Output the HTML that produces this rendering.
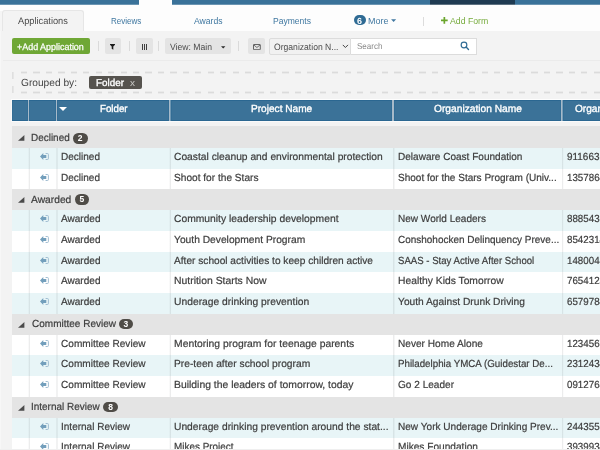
<!DOCTYPE html>
<html lang="en">
<head>
<meta charset="utf-8">
<title>Applications</title>
<style>
*{box-sizing:border-box;margin:0;padding:0}
html,body{width:600px;height:450px;overflow:hidden;background:#f3f3f3}
body{font-family:"Liberation Sans",sans-serif;font-size:10px;color:#444}
#app{position:relative;width:600px;height:450px;overflow:hidden;background:#f7f7f7;will-change:transform}
.t{position:absolute;white-space:pre;transform-origin:0 50%;display:block}
i{display:block;position:absolute;font-style:normal}

/* top colour band */
.topband{position:absolute;left:0;top:0;width:600px;height:5px;background:#fdfdfd}
.topband i{top:0;height:5px;background:linear-gradient(#3a7299 0,#3a7299 4px,#6b95b2 4px,#6b95b2 5px)}
.topband .b1{left:0;width:139px}
.topband .b2{left:172px;width:258px}
.topband .b3{left:430px;width:85px;background:linear-gradient(#1f3b52 0,#1f3b52 4px,#5d7181 4px,#5d7181 5px)}
.topband .b4{left:515px;width:85px}

/* tab strip */
.tabs{position:absolute;left:0;top:5px;width:600px;height:26px;background:#fdfdfd}
.tabs .active{left:2px;top:5px;width:82px;height:21px;background:#f3f3f3;border:1px solid #e6e6e6;border-bottom:0;border-radius:3px 3px 0 0}
.tabs .edge{left:0;top:6px;width:2px;height:20px;background:#f5f5f5}
.tabs .count{left:354px;top:10px;width:11.5px;height:10.4px;border-radius:5.2px;background:#2f6b94}
.tabs .sep{left:423px;top:12px;width:1px;height:8.5px;background:#dcdcdc}
.tabs svg{position:absolute}

/* main panel */
.panel{position:absolute;left:1px;top:31px;width:599px;height:419px;background:#f3f3f3}
.toolbar{position:absolute;left:0;top:31px;width:600px;height:31px}
.toolbar .btn{top:7px;height:16px;background:#e4e4e4;border-radius:2px}
.toolbar .add{left:12px;width:78px;background:#6fa735}
.toolbar .sep{top:10px;height:10px;width:1px;background:#dadada}
.toolbar .field{top:7px;height:17px;background:#fff;border:1px solid #dcdcdc}
.toolbar svg{position:absolute}
.toolbar .rule{left:3px;top:28.5px;width:597px;height:1.5px;background:#ebebeb}

/* grouping panel */
.grouping{position:absolute;left:0;top:62px;width:600px;height:38px}
.grouping .dash-h{left:21px;width:579px;height:3px;background:repeating-linear-gradient(90deg,#dbdbdb 0,#dbdbdb 6.2px,transparent 6.2px,transparent 12.45px);-webkit-mask-image:linear-gradient(rgba(0,0,0,.35) 0,rgba(0,0,0,.35) 1px,#000 1px,#000 2px,rgba(0,0,0,.35) 2px,rgba(0,0,0,.35) 3px);mask-image:linear-gradient(rgba(0,0,0,.35) 0,rgba(0,0,0,.35) 1px,#000 1px,#000 2px,rgba(0,0,0,.35) 2px,rgba(0,0,0,.35) 3px)}
.grouping .dash-v{left:12px;width:2px;height:7px;background:linear-gradient(90deg,#dfdfdf 0,#dfdfdf 1px,#e6e6e6 1px,#e6e6e6 2px)}
.grouping .chip{left:88.7px;top:13.7px;width:53px;height:13.3px;background:#56534e;border-radius:2px}

/* grid */
.ghead{position:absolute;left:11px;top:99px;width:589px;height:23px;background:linear-gradient(#fdfdfd 0,#fdfdfd 1px,#f8f8f8 1px,#f8f8f8 22px,#fafafa 22px,#fafafa 23px)}
.ghead .bar{left:1px;top:1px;width:588px;height:21px;background:#a7bac9}
.ghead .hc{top:1px;height:21px;background:#3b7298;border:1px solid #2b6791;border-left-color:#336d95;border-right-color:#336d95}
.ghead .vs{top:1px;width:1px;height:21px}
.ghead svg{position:absolute}
.gbody{position:absolute;left:12px;top:0;width:588px;height:450px}
.grow{position:absolute;left:0;width:588px;background:#e4e4e4}
.drow{position:absolute;left:0;width:588px;background:#fff}
.drow.alt{background:#e8f5f7}
.tri{position:absolute;left:6.2px}
.open{position:absolute;left:28.2px}
.badge{position:absolute;height:10.7px;border-radius:5.4px;background:#4f4c47;color:#fff;font-size:8.5px;line-height:10.7px;font-weight:700;text-align:center}
.foot{position:absolute;left:0;top:449px;width:600px;height:1px;background:#efefef}
.drow i{top:0;bottom:0;width:2px}
.c1{left:16px;background:linear-gradient(90deg,rgba(70,75,78,0.031) 0,rgba(70,75,78,0.031) 1px,rgba(70,75,78,0.101) 1px,rgba(70,75,78,0.101) 2px)}
.c2{left:44px;background:linear-gradient(90deg,rgba(70,75,78,0.071) 0,rgba(70,75,78,0.071) 1px,rgba(70,75,78,0.071) 1px,rgba(70,75,78,0.071) 2px)}
.c3{left:157px;background:linear-gradient(90deg,rgba(70,75,78,0.031) 0,rgba(70,75,78,0.031) 1px,rgba(70,75,78,0.101) 1px,rgba(70,75,78,0.101) 2px)}
.c4{left:381px;background:linear-gradient(90deg,rgba(70,75,78,0.101) 0,rgba(70,75,78,0.101) 1px,rgba(70,75,78,0.046) 1px,rgba(70,75,78,0.046) 2px)}
.c5{left:550px;background:linear-gradient(90deg,rgba(70,75,78,0.101) 0,rgba(70,75,78,0.101) 1px,rgba(70,75,78,0.020) 1px,rgba(70,75,78,0.020) 2px)}

</style>
</head>
<body>
<div id="app">
  <div class="topband"><i class="b1"></i><i class="b2"></i><i class="b3"></i><i class="b4"></i></div>

  <div class="tabs">
      <i class="edge"></i>
      <i class="active"></i>
      <i class="count"></i>
      <svg style="left:390.6px;top:14.3px" width="6" height="4" viewBox="0 0 6 4"><path d="M0.1 0.2H5.1L2.6 2.9Z" fill="#3f77a0"/></svg>
      <i class="sep"></i>
      <svg style="left:440.8px;top:11.8px" width="7" height="7" viewBox="0 0 7 7"><path d="M2.5 0h1.7v2.5h2.5v1.7h-2.5v2.5h-1.7v-2.5h-2.5v-1.7h2.5z" fill="#6aa52c"/></svg>
      <span class="t" style="left:17.90px;top:9px;font-size:9.6px;line-height:13px;color:#4a4a4a;transform:scaleX(0.9645) skewX(.03deg);">Applications</span>
      <span class="t" style="left:110.70px;top:9px;font-size:9.9px;line-height:13px;color:#3f77a0;transform:scaleX(0.8144) skewX(.03deg);">Reviews</span>
      <span class="t" style="left:194.40px;top:9px;font-size:9.9px;line-height:13px;color:#3f77a0;transform:scaleX(0.8733) skewX(.03deg);">Awards</span>
      <span class="t" style="left:273.00px;top:9px;font-size:9.9px;line-height:13px;color:#3f77a0;transform:scaleX(0.8652) skewX(.03deg);">Payments</span>
      <span class="t" style="left:357.30px;top:10px;font-size:8.8px;line-height:12px;color:#fff;font-weight:700;transform:scaleX(1.0191) skewX(.03deg);">6</span>
      <span class="t" style="left:368.30px;top:9px;font-size:9.9px;line-height:13px;color:#3f77a0;transform:scaleX(0.9067) skewX(.03deg);">More</span>
      <span class="t" style="left:450.00px;top:9px;font-size:9.9px;line-height:13px;color:#76ab3c;transform:scaleX(0.8833) skewX(.03deg);">Add Form</span>
  </div>

  <div class="panel"></div>

  <div class="toolbar">
      <i class="btn add"></i>
      <i class="sep" style="left:98px"></i>
      <i class="btn" style="left:104.7px;width:16.2px"></i>
      <svg style="left:110px;top:12.8px" width="5" height="6" viewBox="0 0 5 6"><path d="M0 0H5V0.8L3.3 2.4V5.8L1.7 4.8V2.4L0 0.8Z" fill="#1b1b1b"/></svg>
      <i class="sep" style="left:129px"></i>
      <i class="btn" style="left:136px;width:16.7px"></i>
      <svg style="left:142px;top:13px" width="5" height="6" viewBox="0 0 5 6" shape-rendering="crispEdges"><path d="M0 0h1v6h-1zM2 0h1v6h-1zM4 0h1v6h-1z" fill="#3f3f3f"/></svg>
      <i class="sep" style="left:158px"></i>
      <i class="btn" style="left:164.7px;width:66.2px"></i>
      <svg style="left:221px;top:14.7px" width="5" height="3" viewBox="0 0 5 3"><path d="M0 0.2H4.4L2.2 2.5Z" fill="#2a2a2a"/></svg>
      <i class="sep" style="left:238.3px"></i>
      <i class="btn" style="left:248px;width:17px"></i>
      <svg style="left:252.8px;top:12.8px" width="8" height="6.4" viewBox="0 0 8 6.4"><rect x="0.5" y="0.5" width="6.8" height="5.2" rx="0.4" fill="none" stroke="#5a5a5a" stroke-width="0.95"/><path d="M0.8 1L3.9 3.5L7 1" fill="none" stroke="#5a5a5a" stroke-width="0.85"/></svg>
      <i class="field" style="left:269px;width:82px;border-radius:2px 0 0 2px;background:#f1f1f1"></i>
      <svg style="left:341.5px;top:13.2px" width="7" height="5" viewBox="0 0 7 5"><path d="M0.8 0.9L3.4 3.5L6 0.9" fill="none" stroke="#444" stroke-width="1"/></svg>
      <i class="field" style="left:351px;width:126px;border-left:0"></i>
      <svg style="left:459.7px;top:10.2px" width="10" height="10" viewBox="0 0 10 10"><circle cx="4" cy="4" r="2.85" fill="none" stroke="#2f6b94" stroke-width="1.15"/><path d="M6.1 6.1L8.5 8.5" stroke="#2f6b94" stroke-width="1.4" stroke-linecap="round"/></svg>
      <i class="rule"></i>
      <span class="t" style="left:17.00px;top:9px;font-size:9.4px;line-height:13px;color:#fff;transform:scaleX(0.9528) skewX(.03deg);-webkit-text-stroke:0.25px #fff;">+Add Application</span>
      <span class="t" style="left:170.00px;top:10px;font-size:9.2px;line-height:12px;color:#4a4a4a;transform:scaleX(0.9379) skewX(.03deg);">View: Main</span>
      <span class="t" style="left:274.00px;top:10px;font-size:9.2px;line-height:12px;color:#4a4a4a;transform:scaleX(0.9354) skewX(.03deg);">Organization N...</span>
      <span class="t" style="left:357.00px;top:9px;font-size:8.6px;line-height:12px;color:#8a8a8a;transform:scaleX(0.9363) skewX(.03deg);">Search</span>
  </div>

  <div class="grouping">
      <i class="dash-h" style="top:9px"></i>
      <i class="dash-h" style="top:29px"></i>
      <i class="dash-v" style="top:10px"></i>
      <i class="dash-v" style="top:24px"></i>
      <i class="chip"></i>
      <span class="t" style="left:20.70px;top:14px;font-size:10.27px;line-height:13px;color:#444;transform:scaleX(0.9912) skewX(.03deg);">Grouped by:</span>
      <span class="t" style="left:95.70px;top:14px;font-size:10.0px;line-height:13px;color:#fff;transform:scaleX(0.9873) skewX(.03deg);-webkit-text-stroke:0.35px #fff;">Folder</span>
      <span class="t" style="left:130.00px;top:14px;font-size:9.6px;line-height:13px;color:#c9c8c5;transform:scaleX(1.0423) skewX(.03deg);">x</span>
  </div>

  <div class="ghead">
      <i class="bar"></i>
      <i class="hc" style="left:1px;width:16px"></i>
      <i class="hc" style="left:18px;width:27px"></i>
      <i class="hc" style="left:46px;width:112px"></i>
      <i class="vs" style="left:159px;background:#6d96b2"></i>
      <i class="hc" style="left:159.5px;width:221.5px"></i>
      <i class="hc" style="left:383px;width:167px"></i>
      <i class="vs" style="left:551px;background:#7a9fb8"></i>
      <i class="hc" style="left:552px;width:37px;border-right:0"></i>
      <svg style="left:48.3px;top:8.3px" width="8" height="5" viewBox="0 0 8 5"><path d="M0 0H8L4 4Z" fill="#fff"/></svg>
      <span class="t" style="left:88.70px;top:3px;font-size:10.27px;line-height:13px;color:#fff;transform:scaleX(0.9481) skewX(.03deg);-webkit-text-stroke:0.35px #fff;">Folder</span>
      <span class="t" style="left:240.30px;top:3px;font-size:10.27px;line-height:13px;color:#fff;transform:scaleX(0.9841) skewX(.03deg);-webkit-text-stroke:0.35px #fff;">Project Name</span>
      <span class="t" style="left:422.70px;top:3px;font-size:10.27px;line-height:13px;color:#fff;transform:scaleX(0.9949) skewX(.03deg);-webkit-text-stroke:0.35px #fff;">Organization Name</span>
      <span class="t" style="left:563.70px;top:3px;font-size:10.27px;line-height:13px;color:#fff;transform:scaleX(0.9855) skewX(.03deg);-webkit-text-stroke:0.35px #fff;">Organization</span>
  </div>

  <div class="gbody">
    <div class="grow" style="top:126px;height:22px">
      <svg class="tri" style="top:8.6px" width="7" height="6" viewBox="0 0 7 6"><path d="M6.4 0 V5.8 H0 Z" fill="#4b4b4b"/></svg>
      <span class="t" style="left:19.30px;top:5px;font-size:10.27px;line-height:13px;color:#3d3d3d;transform:scaleX(0.9686) skewX(.03deg);-webkit-text-stroke:0.2px #3d3d3d;">Declined</span>
      <span class="badge" style="left:60.7px;top:7.1px;width:15.1px">2</span>
    </div>
    <div class="drow alt" style="top:148px;height:21px">
      <i class="c1"></i><i class="c2"></i><i class="c3"></i><i class="c4"></i><i class="c5"></i>
      <svg class="open" style="top:4.85px" width="9" height="7" viewBox="0 0 9 7"><path d="M0 3.5L3.3 0.1V2.1H6.3V4.9H3.3V6.9Z" fill="#739fbc"/><path d="M5.6 0.5H7.4Q8.4 0.5 8.4 1.5V5.5Q8.4 6.5 7.4 6.5H5.6" fill="none" stroke="#9dbbd0" stroke-width="0.95"/></svg>
      <span class="t" style="left:49.00px;top:2px;font-size:10.27px;line-height:13px;color:#3d3d3d;transform:scaleX(0.9761) skewX(.03deg);-webkit-text-stroke:0.2px #3d3d3d;">Declined</span>
      <span class="t" style="left:162.30px;top:2px;font-size:10.27px;line-height:13px;color:#3d3d3d;transform:scaleX(0.9992) skewX(.03deg);-webkit-text-stroke:0.2px #3d3d3d;">Coastal cleanup and environmental protection</span>
      <span class="t" style="left:385.60px;top:2px;font-size:10.27px;line-height:13px;color:#3d3d3d;transform:scaleX(0.9775) skewX(.03deg);-webkit-text-stroke:0.2px #3d3d3d;">Delaware Coast Foundation</span>
      <span class="t" style="left:554.60px;top:2px;font-size:10.27px;line-height:13px;color:#3d3d3d;transform:scaleX(0.9693) skewX(.03deg);-webkit-text-stroke:0.2px #3d3d3d;">9116631</span>
    </div>
    <div class="drow" style="top:169px;height:20px">
      <i class="c1"></i><i class="c2"></i><i class="c3"></i><i class="c4"></i><i class="c5"></i>
      <svg class="open" style="top:4.6px" width="9" height="7" viewBox="0 0 9 7"><path d="M0 3.5L3.3 0.1V2.1H6.3V4.9H3.3V6.9Z" fill="#739fbc"/><path d="M5.6 0.5H7.4Q8.4 0.5 8.4 1.5V5.5Q8.4 6.5 7.4 6.5H5.6" fill="none" stroke="#9dbbd0" stroke-width="0.95"/></svg>
      <span class="t" style="left:49.00px;top:2px;font-size:10.27px;line-height:13px;color:#3d3d3d;transform:scaleX(0.9761) skewX(.03deg);-webkit-text-stroke:0.2px #3d3d3d;">Declined</span>
      <span class="t" style="left:162.30px;top:2px;font-size:10.27px;line-height:13px;color:#3d3d3d;transform:scaleX(0.9870) skewX(.03deg);-webkit-text-stroke:0.2px #3d3d3d;">Shoot for the Stars</span>
      <span class="t" style="left:385.60px;top:2px;font-size:10.27px;line-height:13px;color:#3d3d3d;transform:scaleX(0.9771) skewX(.03deg);-webkit-text-stroke:0.2px #3d3d3d;">Shoot for the Stars Program (Univ...</span>
      <span class="t" style="left:554.60px;top:2px;font-size:10.27px;line-height:13px;color:#3d3d3d;transform:scaleX(0.9507) skewX(.03deg);-webkit-text-stroke:0.2px #3d3d3d;">1357864</span>
    </div>
    <div class="grow" style="top:189px;height:21px">
      <svg class="tri" style="top:8.3px" width="7" height="6" viewBox="0 0 7 6"><path d="M6.4 0 V5.8 H0 Z" fill="#4b4b4b"/></svg>
      <span class="t" style="left:19.00px;top:4px;font-size:10.27px;line-height:13px;color:#3d3d3d;transform:scaleX(0.9989) skewX(.03deg);-webkit-text-stroke:0.2px #3d3d3d;">Awarded</span>
      <span class="badge" style="left:62.5px;top:5.2px;width:14.7px">5</span>
    </div>
    <div class="drow alt" style="top:210px;height:21px">
      <i class="c1"></i><i class="c2"></i><i class="c3"></i><i class="c4"></i><i class="c5"></i>
      <svg class="open" style="top:5.1px" width="9" height="7" viewBox="0 0 9 7"><path d="M0 3.5L3.3 0.1V2.1H6.3V4.9H3.3V6.9Z" fill="#739fbc"/><path d="M5.6 0.5H7.4Q8.4 0.5 8.4 1.5V5.5Q8.4 6.5 7.4 6.5H5.6" fill="none" stroke="#9dbbd0" stroke-width="0.95"/></svg>
      <span class="t" style="left:49.00px;top:2px;font-size:10.27px;line-height:13px;color:#3d3d3d;transform:scaleX(0.9791) skewX(.03deg);-webkit-text-stroke:0.2px #3d3d3d;">Awarded</span>
      <span class="t" style="left:162.30px;top:2px;font-size:10.27px;line-height:13px;color:#3d3d3d;transform:scaleX(1.0045) skewX(.03deg);-webkit-text-stroke:0.2px #3d3d3d;">Community leadership development</span>
      <span class="t" style="left:385.60px;top:2px;font-size:10.27px;line-height:13px;color:#3d3d3d;transform:scaleX(0.9770) skewX(.03deg);-webkit-text-stroke:0.2px #3d3d3d;">New World Leaders</span>
      <span class="t" style="left:554.60px;top:2px;font-size:10.27px;line-height:13px;color:#3d3d3d;transform:scaleX(0.9507) skewX(.03deg);-webkit-text-stroke:0.2px #3d3d3d;">8885431</span>
    </div>
    <div class="drow" style="top:231px;height:21px">
      <i class="c1"></i><i class="c2"></i><i class="c3"></i><i class="c4"></i><i class="c5"></i>
      <svg class="open" style="top:4.85px" width="9" height="7" viewBox="0 0 9 7"><path d="M0 3.5L3.3 0.1V2.1H6.3V4.9H3.3V6.9Z" fill="#739fbc"/><path d="M5.6 0.5H7.4Q8.4 0.5 8.4 1.5V5.5Q8.4 6.5 7.4 6.5H5.6" fill="none" stroke="#9dbbd0" stroke-width="0.95"/></svg>
      <span class="t" style="left:49.00px;top:2px;font-size:10.27px;line-height:13px;color:#3d3d3d;transform:scaleX(0.9791) skewX(.03deg);-webkit-text-stroke:0.2px #3d3d3d;">Awarded</span>
      <span class="t" style="left:162.30px;top:2px;font-size:10.27px;line-height:13px;color:#3d3d3d;transform:scaleX(0.9981) skewX(.03deg);-webkit-text-stroke:0.2px #3d3d3d;">Youth Development Program</span>
      <span class="t" style="left:385.60px;top:2px;font-size:10.27px;line-height:13px;color:#3d3d3d;transform:scaleX(0.9707) skewX(.03deg);-webkit-text-stroke:0.2px #3d3d3d;">Conshohocken Delinquency Preve...</span>
      <span class="t" style="left:554.60px;top:2px;font-size:10.27px;line-height:13px;color:#3d3d3d;transform:scaleX(0.9507) skewX(.03deg);-webkit-text-stroke:0.2px #3d3d3d;">8542314</span>
    </div>
    <div class="drow alt" style="top:252px;height:20px">
      <i class="c1"></i><i class="c2"></i><i class="c3"></i><i class="c4"></i><i class="c5"></i>
      <svg class="open" style="top:4.6px" width="9" height="7" viewBox="0 0 9 7"><path d="M0 3.5L3.3 0.1V2.1H6.3V4.9H3.3V6.9Z" fill="#739fbc"/><path d="M5.6 0.5H7.4Q8.4 0.5 8.4 1.5V5.5Q8.4 6.5 7.4 6.5H5.6" fill="none" stroke="#9dbbd0" stroke-width="0.95"/></svg>
      <span class="t" style="left:49.00px;top:2px;font-size:10.27px;line-height:13px;color:#3d3d3d;transform:scaleX(0.9791) skewX(.03deg);-webkit-text-stroke:0.2px #3d3d3d;">Awarded</span>
      <span class="t" style="left:162.30px;top:2px;font-size:10.27px;line-height:13px;color:#3d3d3d;transform:scaleX(0.9880) skewX(.03deg);-webkit-text-stroke:0.2px #3d3d3d;">After school activities to keep children active</span>
      <span class="t" style="left:385.60px;top:2px;font-size:10.27px;line-height:13px;color:#3d3d3d;transform:scaleX(0.9361) skewX(.03deg);-webkit-text-stroke:0.2px #3d3d3d;">SAAS - Stay Active After School</span>
      <span class="t" style="left:554.60px;top:2px;font-size:10.27px;line-height:13px;color:#3d3d3d;transform:scaleX(0.9507) skewX(.03deg);-webkit-text-stroke:0.2px #3d3d3d;">1480045</span>
    </div>
    <div class="drow" style="top:272px;height:21px">
      <i class="c1"></i><i class="c2"></i><i class="c3"></i><i class="c4"></i><i class="c5"></i>
      <svg class="open" style="top:5.35px" width="9" height="7" viewBox="0 0 9 7"><path d="M0 3.5L3.3 0.1V2.1H6.3V4.9H3.3V6.9Z" fill="#739fbc"/><path d="M5.6 0.5H7.4Q8.4 0.5 8.4 1.5V5.5Q8.4 6.5 7.4 6.5H5.6" fill="none" stroke="#9dbbd0" stroke-width="0.95"/></svg>
      <span class="t" style="left:49.00px;top:2px;font-size:10.27px;line-height:13px;color:#3d3d3d;transform:scaleX(0.9791) skewX(.03deg);-webkit-text-stroke:0.2px #3d3d3d;">Awarded</span>
      <span class="t" style="left:162.30px;top:2px;font-size:10.27px;line-height:13px;color:#3d3d3d;transform:scaleX(1.0134) skewX(.03deg);-webkit-text-stroke:0.2px #3d3d3d;">Nutrition Starts Now</span>
      <span class="t" style="left:385.60px;top:2px;font-size:10.27px;line-height:13px;color:#3d3d3d;transform:scaleX(1.0032) skewX(.03deg);-webkit-text-stroke:0.2px #3d3d3d;">Healthy Kids Tomorrow</span>
      <span class="t" style="left:554.60px;top:2px;font-size:10.27px;line-height:13px;color:#3d3d3d;transform:scaleX(0.9507) skewX(.03deg);-webkit-text-stroke:0.2px #3d3d3d;">7654123</span>
    </div>
    <div class="drow alt" style="top:293px;height:21px">
      <i class="c1"></i><i class="c2"></i><i class="c3"></i><i class="c4"></i><i class="c5"></i>
      <svg class="open" style="top:5.1px" width="9" height="7" viewBox="0 0 9 7"><path d="M0 3.5L3.3 0.1V2.1H6.3V4.9H3.3V6.9Z" fill="#739fbc"/><path d="M5.6 0.5H7.4Q8.4 0.5 8.4 1.5V5.5Q8.4 6.5 7.4 6.5H5.6" fill="none" stroke="#9dbbd0" stroke-width="0.95"/></svg>
      <span class="t" style="left:49.00px;top:2px;font-size:10.27px;line-height:13px;color:#3d3d3d;transform:scaleX(0.9791) skewX(.03deg);-webkit-text-stroke:0.2px #3d3d3d;">Awarded</span>
      <span class="t" style="left:162.30px;top:2px;font-size:10.27px;line-height:13px;color:#3d3d3d;transform:scaleX(1.0038) skewX(.03deg);-webkit-text-stroke:0.2px #3d3d3d;">Underage drinking prevention</span>
      <span class="t" style="left:385.60px;top:2px;font-size:10.27px;line-height:13px;color:#3d3d3d;transform:scaleX(0.9957) skewX(.03deg);-webkit-text-stroke:0.2px #3d3d3d;">Youth Against Drunk Driving</span>
      <span class="t" style="left:554.60px;top:2px;font-size:10.27px;line-height:13px;color:#3d3d3d;transform:scaleX(0.9507) skewX(.03deg);-webkit-text-stroke:0.2px #3d3d3d;">6579784</span>
    </div>
    <div class="grow" style="top:314px;height:21px">
      <svg class="tri" style="top:7.8px" width="7" height="6" viewBox="0 0 7 6"><path d="M6.4 0 V5.8 H0 Z" fill="#4b4b4b"/></svg>
      <span class="t" style="left:19.50px;top:3px;font-size:10.27px;line-height:13px;color:#3d3d3d;transform:scaleX(0.9751) skewX(.03deg);-webkit-text-stroke:0.2px #3d3d3d;">Committee Review</span>
      <span class="badge" style="left:106.7px;top:4.7px;width:14.6px">3</span>
    </div>
    <div class="drow" style="top:335px;height:20px">
      <i class="c1"></i><i class="c2"></i><i class="c3"></i><i class="c4"></i><i class="c5"></i>
      <svg class="open" style="top:4.6px" width="9" height="7" viewBox="0 0 9 7"><path d="M0 3.5L3.3 0.1V2.1H6.3V4.9H3.3V6.9Z" fill="#739fbc"/><path d="M5.6 0.5H7.4Q8.4 0.5 8.4 1.5V5.5Q8.4 6.5 7.4 6.5H5.6" fill="none" stroke="#9dbbd0" stroke-width="0.95"/></svg>
      <span class="t" style="left:49.00px;top:2px;font-size:10.27px;line-height:13px;color:#3d3d3d;transform:scaleX(0.9810) skewX(.03deg);-webkit-text-stroke:0.2px #3d3d3d;">Committee Review</span>
      <span class="t" style="left:162.30px;top:2px;font-size:10.27px;line-height:13px;color:#3d3d3d;transform:scaleX(1.0088) skewX(.03deg);-webkit-text-stroke:0.2px #3d3d3d;">Mentoring program for teenage parents</span>
      <span class="t" style="left:385.60px;top:2px;font-size:10.27px;line-height:13px;color:#3d3d3d;transform:scaleX(0.9852) skewX(.03deg);-webkit-text-stroke:0.2px #3d3d3d;">Never Home Alone</span>
      <span class="t" style="left:554.60px;top:2px;font-size:10.27px;line-height:13px;color:#3d3d3d;transform:scaleX(0.9507) skewX(.03deg);-webkit-text-stroke:0.2px #3d3d3d;">1234567</span>
    </div>
    <div class="drow alt" style="top:355px;height:21px">
      <i class="c1"></i><i class="c2"></i><i class="c3"></i><i class="c4"></i><i class="c5"></i>
      <svg class="open" style="top:5.35px" width="9" height="7" viewBox="0 0 9 7"><path d="M0 3.5L3.3 0.1V2.1H6.3V4.9H3.3V6.9Z" fill="#739fbc"/><path d="M5.6 0.5H7.4Q8.4 0.5 8.4 1.5V5.5Q8.4 6.5 7.4 6.5H5.6" fill="none" stroke="#9dbbd0" stroke-width="0.95"/></svg>
      <span class="t" style="left:49.00px;top:2px;font-size:10.27px;line-height:13px;color:#3d3d3d;transform:scaleX(0.9810) skewX(.03deg);-webkit-text-stroke:0.2px #3d3d3d;">Committee Review</span>
      <span class="t" style="left:162.30px;top:2px;font-size:10.27px;line-height:13px;color:#3d3d3d;transform:scaleX(0.9987) skewX(.03deg);-webkit-text-stroke:0.2px #3d3d3d;">Pre-teen after school program</span>
      <span class="t" style="left:385.60px;top:2px;font-size:10.27px;line-height:13px;color:#3d3d3d;transform:scaleX(0.9502) skewX(.03deg);-webkit-text-stroke:0.2px #3d3d3d;">Philadelphia YMCA (Guidestar De...</span>
      <span class="t" style="left:554.60px;top:2px;font-size:10.27px;line-height:13px;color:#3d3d3d;transform:scaleX(0.9507) skewX(.03deg);-webkit-text-stroke:0.2px #3d3d3d;">2312434</span>
    </div>
    <div class="drow" style="top:376px;height:21px">
      <i class="c1"></i><i class="c2"></i><i class="c3"></i><i class="c4"></i><i class="c5"></i>
      <svg class="open" style="top:5.1px" width="9" height="7" viewBox="0 0 9 7"><path d="M0 3.5L3.3 0.1V2.1H6.3V4.9H3.3V6.9Z" fill="#739fbc"/><path d="M5.6 0.5H7.4Q8.4 0.5 8.4 1.5V5.5Q8.4 6.5 7.4 6.5H5.6" fill="none" stroke="#9dbbd0" stroke-width="0.95"/></svg>
      <span class="t" style="left:49.00px;top:2px;font-size:10.27px;line-height:13px;color:#3d3d3d;transform:scaleX(0.9810) skewX(.03deg);-webkit-text-stroke:0.2px #3d3d3d;">Committee Review</span>
      <span class="t" style="left:162.30px;top:2px;font-size:10.27px;line-height:13px;color:#3d3d3d;transform:scaleX(1.0114) skewX(.03deg);-webkit-text-stroke:0.2px #3d3d3d;">Building the leaders of tomorrow, today</span>
      <span class="t" style="left:385.60px;top:2px;font-size:10.27px;line-height:13px;color:#3d3d3d;transform:scaleX(0.9811) skewX(.03deg);-webkit-text-stroke:0.2px #3d3d3d;">Go 2 Leader</span>
      <span class="t" style="left:554.60px;top:2px;font-size:10.27px;line-height:13px;color:#3d3d3d;transform:scaleX(0.9507) skewX(.03deg);-webkit-text-stroke:0.2px #3d3d3d;">0912765</span>
    </div>
    <div class="grow" style="top:397px;height:21px">
      <svg class="tri" style="top:7.8px" width="7" height="6" viewBox="0 0 7 6"><path d="M6.4 0 V5.8 H0 Z" fill="#4b4b4b"/></svg>
      <span class="t" style="left:19.30px;top:3px;font-size:10.27px;line-height:13px;color:#3d3d3d;transform:scaleX(0.9708) skewX(.03deg);-webkit-text-stroke:0.2px #3d3d3d;">Internal Review</span>
      <span class="badge" style="left:91.3px;top:4.7px;width:14.7px">8</span>
    </div>
    <div class="drow alt" style="top:418px;height:20px">
      <i class="c1"></i><i class="c2"></i><i class="c3"></i><i class="c4"></i><i class="c5"></i>
      <svg class="open" style="top:4.6px" width="9" height="7" viewBox="0 0 9 7"><path d="M0 3.5L3.3 0.1V2.1H6.3V4.9H3.3V6.9Z" fill="#739fbc"/><path d="M5.6 0.5H7.4Q8.4 0.5 8.4 1.5V5.5Q8.4 6.5 7.4 6.5H5.6" fill="none" stroke="#9dbbd0" stroke-width="0.95"/></svg>
      <span class="t" style="left:49.00px;top:2px;font-size:10.27px;line-height:13px;color:#3d3d3d;transform:scaleX(0.9750) skewX(.03deg);-webkit-text-stroke:0.2px #3d3d3d;">Internal Review</span>
      <span class="t" style="left:162.30px;top:2px;font-size:10.27px;line-height:13px;color:#3d3d3d;transform:scaleX(0.9996) skewX(.03deg);-webkit-text-stroke:0.2px #3d3d3d;">Underage drinking prevention around the stat...</span>
      <span class="t" style="left:385.60px;top:2px;font-size:10.27px;line-height:13px;color:#3d3d3d;transform:scaleX(0.9806) skewX(.03deg);-webkit-text-stroke:0.2px #3d3d3d;">New York Underage Drinking Prev...</span>
      <span class="t" style="left:554.60px;top:2px;font-size:10.27px;line-height:13px;color:#3d3d3d;transform:scaleX(0.9507) skewX(.03deg);-webkit-text-stroke:0.2px #3d3d3d;">2443551</span>
    </div>
    <div class="drow" style="top:438px;height:21px">
      <i class="c1"></i><i class="c2"></i><i class="c3"></i><i class="c4"></i><i class="c5"></i>
      <svg class="open" style="top:5.35px" width="9" height="7" viewBox="0 0 9 7"><path d="M0 3.5L3.3 0.1V2.1H6.3V4.9H3.3V6.9Z" fill="#739fbc"/><path d="M5.6 0.5H7.4Q8.4 0.5 8.4 1.5V5.5Q8.4 6.5 7.4 6.5H5.6" fill="none" stroke="#9dbbd0" stroke-width="0.95"/></svg>
      <span class="t" style="left:49.00px;top:2px;font-size:10.27px;line-height:13px;color:#3d3d3d;transform:scaleX(0.9750) skewX(.03deg);-webkit-text-stroke:0.2px #3d3d3d;">Internal Review</span>
      <span class="t" style="left:162.30px;top:2px;font-size:10.27px;line-height:13px;color:#3d3d3d;transform:scaleX(0.9658) skewX(.03deg);-webkit-text-stroke:0.2px #3d3d3d;">Mikes Project</span>
      <span class="t" style="left:385.60px;top:2px;font-size:10.27px;line-height:13px;color:#3d3d3d;transform:scaleX(0.9860) skewX(.03deg);-webkit-text-stroke:0.2px #3d3d3d;">Mikes Foundation</span>
      <span class="t" style="left:554.60px;top:2px;font-size:10.27px;line-height:13px;color:#3d3d3d;transform:scaleX(0.9507) skewX(.03deg);-webkit-text-stroke:0.2px #3d3d3d;">3939934</span>
    </div>
  </div>
  <i class="foot"></i>
</div>
</body>
</html>
